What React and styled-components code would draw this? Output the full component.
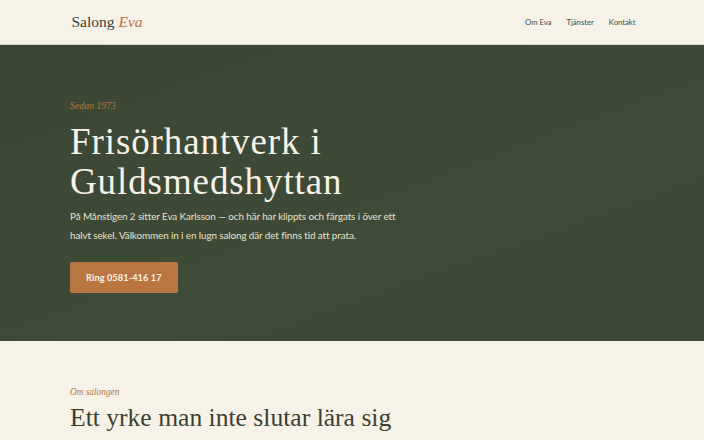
import React from 'react';
import styled, { createGlobalStyle } from 'styled-components';

const GlobalStyle = createGlobalStyle`
  html, body {
    margin: 0;
    padding: 0;
    background: #f7f2e8;
  }
  body {
    font-family: Lato, "Open Sans", sans-serif;
    color: #3a3f30;
  }
`;

const Container = styled.div`
  max-width: 564px;
  margin: 0 auto;
  padding: 0 70px;
`;

const Header = styled.header`
  background: #f7f2e8;
  border-bottom: 1px solid #d9d2bf;
`;

const HeaderInner = styled(Container)`
  height: 44px;
  padding-right: 67px;
  display: flex;
  align-items: center;
  justify-content: space-between;
`;

const Logo = styled.a`
  font-family: "Liberation Serif", serif;
  font-size: 15.5px;
  color: #3a3f30;
  text-decoration: none;

  em {
    color: #b5773f;
    font-style: italic;
  }
`;

const Nav = styled.nav`
  display: flex;
  gap: 15px;
`;

const NavLink = styled.a`
  font-size: 7.8px;
  letter-spacing: -0.05px;
  color: #4a4d40;
  text-decoration: none;
`;

const Hero = styled.section`
  background: linear-gradient(160deg, #3b4733 0%, #3e4b36 60%, #3c4934 100%);
  color: #f7f2e8;
  height: 296px;
  box-sizing: border-box;
  padding-top: 54px;
`;

const Kicker = styled.p`
  margin: 0;
  font-family: "Liberation Serif", serif;
  font-style: italic;
  font-size: ${({ small }) => (small ? '9.3px' : '9.8px')};
  line-height: 14px;
  color: #b5773f;
`;

const Title = styled.h1`
  margin: 9px 0 0;
  font-family: "Liberation Serif", serif;
  font-weight: 400;
  font-size: 37px;
  letter-spacing: 0.9px;
  line-height: 40px;
  color: #f7f2e8;
`;

const Lead = styled.p`
  margin: 5px 0 0;
  max-width: 340px;
  font-size: 9.9px;
  letter-spacing: -0.1px;
  line-height: 19px;
  color: #e8e2cf;
`;

const CallButton = styled.a`
  display: inline-block;
  margin-top: 17px;
  padding: 0 16px;
  height: 31px;
  line-height: 31px;
  background: #b97640;
  border-radius: 2px;
  color: #f7f2e8;
  font-size: 9.2px;
  font-weight: 700;
  letter-spacing: 0.1px;
  text-decoration: none;
`;

const About = styled.section`
  padding-top: 44px;
`;

const SectionTitle = styled.h2`
  margin: 3px 0 0;
  font-family: "Liberation Serif", serif;
  font-weight: 400;
  font-size: 25.6px;
  line-height: 32px;
  color: #3a3f30;
`;

export default function App() {
  return (
    <>
      <GlobalStyle />
      <Header>
        <HeaderInner>
          <Logo href="#">Salong <em>Eva</em></Logo>
          <Nav>
            <NavLink href="#om">Om Eva</NavLink>
            <NavLink href="#tjanster">Tjänster</NavLink>
            <NavLink href="#kontakt">Kontakt</NavLink>
          </Nav>
        </HeaderInner>
      </Header>
      <Hero>
        <Container>
          <Kicker>Sedan 1973</Kicker>
          <Title>Frisörhantverk i<br />Guldsmedshyttan</Title>
          <Lead>
            På Månstigen 2 sitter Eva Karlsson — och här har klippts och färgats i över ett
            halvt sekel. Välkommen in i en lugn salong där det finns tid att prata.
          </Lead>
          <CallButton href="tel:058141617">Ring 0581-416 17</CallButton>
        </Container>
      </Hero>
      <About>
        <Container>
          <Kicker small>Om salongen</Kicker>
          <SectionTitle>Ett yrke man inte slutar lära sig</SectionTitle>
        </Container>
      </About>
    </>
  );
}
